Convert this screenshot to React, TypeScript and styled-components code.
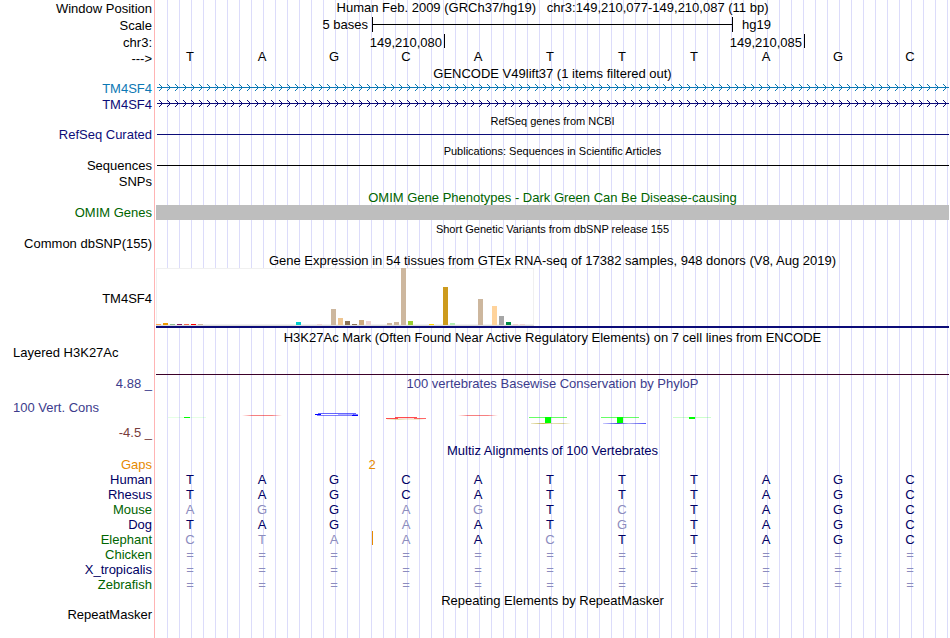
import React from "react";
import styled, { createGlobalStyle } from "styled-components";

const BASES = 11;

const colors = {
  guide: "#dcdcfa",
  edge: "#ffb4b4",
  text: "#000000",
  navy: "#0c0c78",
  blue: "#0c78b4",
  green: "#006400",
  alignment: "#000064",
  mismatch: "#8c8cbe",
  orange: "#e68a00",
  consHigh: "#3c3c8c",
  consLow: "#783c3c",
};

const GlobalStyle = createGlobalStyle`
  body {
    margin: 0;
    background: #fff;
    color: ${colors.text};
    font-family: "Liberation Sans", Arial, Helvetica, sans-serif;
    font-size: 13px;
    line-height: 15px;
  }
`;

const Browser = styled.main`
  box-sizing: border-box;
  width: 100%;
  min-height: 100vh;
  overflow: hidden;
  padding-right: 1px;
  background:
    linear-gradient(${colors.edge}, ${colors.edge}) 154px 0 / 1px 100% no-repeat,
    repeating-linear-gradient(
        to right,
        transparent 0 11px,
        ${colors.guide} 11px 12px
      )
      156px 0 / calc(100% - 157px) 100% no-repeat;
`;

const Row = styled.div<{ $height: number }>`
  display: grid;
  grid-template-columns: 156px minmax(0, 1fr);
  min-height: ${(props) => props.$height}px;
`;

const Label = styled.div<{ $color?: string; $start?: boolean }>`
  display: flex;
  align-items: center;
  justify-content: ${(props) => (props.$start ? "flex-start" : "flex-end")};
  padding: 0 4px 0 13px;
  color: ${(props) => props.$color ?? colors.text};
  white-space: nowrap;
`;

const Title = styled.h2<{ $color?: string; $small?: boolean }>`
  display: flex;
  align-items: center;
  justify-content: center;
  grid-column: 2;
  margin: 0;
  padding-top: 2px;
  color: ${(props) => props.$color ?? colors.text};
  font-size: ${(props) => (props.$small ? 11 : 13)}px;
  font-weight: normal;
  line-height: 12px;
  white-space: pre;
`;

const PositionTitle = styled(Title)`
  padding: 0 0 2px;
`;

const BaseGrid = styled.div`
  display: grid;
  grid-template-columns: repeat(${BASES}, minmax(0, 1fr));
  padding-right: 1px;
`;

const Base = styled.span`
  padding-right: 4px;
  line-height: 13px;
  text-align: center;
`;

const ScaleText = styled.span<{ $column: string; $end?: boolean }>`
  grid-column: ${(props) => props.$column};
  grid-row: 1;
  padding: ${(props) => (props.$end ? "0 4px 0 0" : "0 0 0 10px")};
  text-align: ${(props) => (props.$end ? "right" : "left")};
`;

const ScaleBar = styled.div`
  display: flex;
  align-items: center;
  grid-column: 4 / 9;
  grid-row: 1;
  height: 15px;
  margin-right: -1px;
  border: solid #000;
  border-width: 0 1px;

  &::before {
    content: "";
    flex: 1;
    height: 1px;
    background: #000;
  }
`;

const Position = styled.span<{ $column: string }>`
  grid-column: ${(props) => props.$column};
  height: 14px;
  margin-right: -1px;
  padding-right: 2px;
  border-right: 1px solid #000;
  line-height: 17px;
  text-align: right;
`;

const Track = styled.div`
  display: flex;
  align-items: center;
  padding-left: 1px;
`;

const Line = styled.div<{ $color: string }>`
  flex: 1;
  height: 1px;
  background: ${(props) => props.$color};
`;

const GeneSvg = styled.svg`
  display: block;
  width: 100%;
  height: 8px;
`;

const Block = styled.div`
  background: #bebebe;
`;

const Expression = styled.div`
  display: flex;
  flex-direction: column;
  border-bottom: 2px solid ${colors.navy};
`;

const Bars = styled.div`
  display: flex;
  align-items: flex-end;
  align-self: flex-start;
  gap: 2px;
  height: 57px;
  padding-right: 2px;
  background: #fff;
  border-bottom: 1px solid #dcdcdc;
  box-shadow: inset 0 0 0 1px #f0f0f0;
`;

const Bar = styled.div<{ $height: number; $color: string }>`
  width: 5px;
  height: ${(props) => props.$height}px;
  background: ${(props) => props.$color};
`;

const Regulation = styled.div`
  border-bottom: 1px solid #3c0028;
`;

const RegulationLabel = styled(Label)`
  align-items: flex-start;
`;

const Conservation = styled.div`
  display: grid;
  grid-template-columns: 156px minmax(0, 1fr);
  grid-template-rows: 16px 32px 19px;
`;

const ConservationSvg = styled.svg`
  display: block;
  grid-column: 2;
  grid-row: 2 / 4;
  align-self: end;
  width: 100%;
  height: 49px;
`;

const AlignmentWrapper = styled.div`
  padding-right: 1px;
`;

const AlignmentTable = styled.table`
  width: 100%;
  table-layout: fixed;
  border-collapse: collapse;
`;

const Species = styled.th<{ $color: string }>`
  width: 152px;
  height: 15px;
  padding: 0 4px 0 0;
  color: ${(props) => props.$color};
  font-weight: normal;
  text-align: right;
`;

const Cell = styled.td<{ $muted?: boolean }>`
  position: relative;
  padding: 0 4px 0 0;
  color: ${(props) => (props.$muted ? colors.mismatch : colors.alignment)};
  text-align: center;
`;

const GapCount = styled.span`
  position: absolute;
  top: 0;
  left: 0;
  color: ${colors.orange};
  transform: translateX(-50%);
`;

const Insertion = styled.span`
  position: absolute;
  top: -1px;
  left: 0;
  width: 1px;
  height: 14px;
  background: ${colors.orange};
`;

const REFERENCE = "TAGCATTTAGC";

const SPECIES = [
  { name: "Human", color: colors.alignment, bases: "TAGCATTTAGC" },
  { name: "Rhesus", color: colors.alignment, bases: "TAGCATTTAGC" },
  { name: "Mouse", color: colors.green, bases: "AGGAGTCTAGC" },
  { name: "Dog", color: colors.alignment, bases: "TAGAATGTAGC" },
  {
    name: "Elephant",
    color: colors.green,
    bases: "CTAAACTTAGC",
    insertion: 3,
  },
  { name: "Chicken", color: colors.green, bases: "===========" },
  { name: "X_tropicalis", color: colors.alignment, bases: "===========" },
  { name: "Zebrafish", color: colors.green, bases: "===========" },
];

// tissue index -> bar height and colour
const TISSUES: Record<number, [number, string]> = {
  0: [1, "#ffa54f"],
  1: [2, "#ee9a00"],
  2: [1, "#8fbc8f"],
  3: [1, "#8b1c62"],
  4: [1, "#ee6a50"],
  5: [1, "#ff0000"],
  6: [1, "#cdb79e"],
  20: [3, "#00cdcd"],
  23: [1, "#eed5d2"],
  25: [16, "#cdb79e"],
  26: [7, "#eec591"],
  27: [4, "#8b7355"],
  28: [1, "#8b7355"],
  29: [5, "#cdaa7d"],
  30: [4, "#eed5d2"],
  33: [2, "#cdb79e"],
  34: [3, "#cdb79e"],
  35: [57, "#cdb79e"],
  36: [4, "#9acd32"],
  39: [1, "#ffd700"],
  41: [38, "#cd9b1d"],
  42: [2, "#b4eeb4"],
  46: [26, "#cdb79e"],
  48: [19, "#ffd39b"],
  49: [9, "#a6a6a6"],
  50: [3, "#008b45"],
  51: [1, "#eed5d2"],
  52: [1, "#eed5d2"],
};

interface TitleRowProps {
  children: React.ReactNode;
  height?: number;
  color?: string;
  small?: boolean;
}

const TitleRow = ({ children, height = 16, color, small }: TitleRowProps) => (
  <Row $height={height}>
    <Title $color={color} $small={small}>
      {children}
    </Title>
  </Row>
);

const GeneTrack = ({ id, color }: { id: string; color: string }) => (
  <Row $height={16}>
    <Label $color={color}>TM4SF4</Label>
    <Track>
      <GeneSvg aria-hidden="true">
        <defs>
          <pattern id={id} width="8" height="8" patternUnits="userSpaceOnUse">
            <path
              d="M2 0h1v1h1v1h1v1h1v1h-1v1h-1v1h-1v1h-1v-1h1v-1h1v-1h1v-1h-1v-1h-1v-1h-1z"
              fill={color}
            />
          </pattern>
        </defs>
        <rect width="100%" height="8" fill={`url(#${id})`} />
        <rect y="3" width="100%" height="1" fill={color} />
      </GeneSvg>
    </Track>
  </Row>
);

const ConservationPlot = () => (
  <ConservationSvg
    viewBox="0 0 793 49"
    preserveAspectRatio="none"
    shapeRendering="crispEdges"
    aria-hidden="true"
  >
    <defs>
      <linearGradient id="redFade">
        <stop offset="0" stopColor="#f00" stopOpacity="0" />
        <stop offset="0.25" stopColor="#e00" stopOpacity="0.5" />
        <stop offset="0.75" stopColor="#e00" stopOpacity="0.5" />
        <stop offset="1" stopColor="#f00" stopOpacity="0" />
      </linearGradient>
      <linearGradient id="oliveFade">
        <stop offset="0" stopColor="#aa9600" stopOpacity="0.2" />
        <stop offset="0.3" stopColor="#aa9600" stopOpacity="0.7" />
        <stop offset="0.5" stopColor="#aa9600" stopOpacity="0.3" />
        <stop offset="0.8" stopColor="#aa9600" stopOpacity="0.4" />
        <stop offset="1" stopColor="#aa9600" stopOpacity="0" />
      </linearGradient>
      <linearGradient id="blueFade">
        <stop offset="0" stopColor="#00f" stopOpacity="0.2" />
        <stop offset="0.35" stopColor="#00c" stopOpacity="0.7" />
        <stop offset="0.6" stopColor="#00c" stopOpacity="0.3" />
        <stop offset="1" stopColor="#00f" stopOpacity="0.7" />
      </linearGradient>
    </defs>
    <rect x="12" y="24" width="38" height="1" fill="#0f0" opacity="0.1" />
    <rect x="28" y="24" width="6" height="1" fill="#0f0" />
    <rect x="86" y="22" width="40" height="1" fill="url(#redFade)" />

    <rect x="162" y="20" width="38" height="1" fill="#00f" opacity="0.6" />
    <rect x="159" y="21" width="6" height="1" fill="#00f" />
    <rect x="182" y="21" width="16" height="1" fill="#00f" opacity="0.3" />
    <rect x="197" y="21" width="5" height="1" fill="#00f" opacity="0.5" />
    <rect x="165" y="21" width="17" height="1" fill="#fff" />
    <rect x="161" y="22" width="37" height="1" fill="#00f" opacity="0.5" />
    <rect x="196" y="22" width="6" height="1" fill="#00f" />

    <rect x="239" y="24" width="22" height="1" fill="#f00" opacity="0.7" />
    <rect x="230" y="25" width="12" height="1" fill="#f00" opacity="0.7" />
    <rect x="242" y="25" width="16" height="1" fill="#f00" opacity="0.15" />
    <rect x="258" y="25" width="12" height="1" fill="#f00" opacity="0.6" />
    <rect x="231" y="26" width="38" height="1" fill="url(#oliveFade)" opacity="0.5" />

    <rect x="302" y="22" width="40" height="1" fill="url(#redFade)" />

    <rect x="373" y="24" width="38" height="1" fill="#0f0" opacity="0.6" />
    <rect x="389" y="24" width="6" height="6" fill="#0f0" />
    <rect x="375" y="30" width="40" height="1" fill="url(#oliveFade)" />

    <rect x="445" y="24" width="38" height="1" fill="#0f0" opacity="0.6" />
    <rect x="461" y="24" width="6" height="6" fill="#0f0" />
    <rect x="447" y="30" width="43" height="1" fill="url(#blueFade)" />

    <rect x="517" y="24" width="38" height="1" fill="#0f0" opacity="0.2" />
    <rect x="533" y="24" width="6" height="2" fill="#0f0" />
  </ConservationSvg>
);

const Alignment = () => (
  <AlignmentWrapper>
    <AlignmentTable>
      <tbody>
        <tr>
          <Species scope="row" $color={colors.orange}>
            Gaps
          </Species>
          {Array.from({ length: BASES }, (_, i) => (
            <Cell key={i}>{i === 3 && <GapCount>2</GapCount>}</Cell>
          ))}
        </tr>
        {SPECIES.map((species) => (
          <tr key={species.name}>
            <Species scope="row" $color={species.color}>
              {species.name}
            </Species>
            {species.bases.split("").map((base, i) => (
              <Cell key={i} $muted={base !== REFERENCE[i]}>
                {species.insertion === i && <Insertion />}
                {base}
              </Cell>
            ))}
          </tr>
        ))}
      </tbody>
    </AlignmentTable>
  </AlignmentWrapper>
);

const App = () => (
  <>
    <GlobalStyle />
    <Browser>
      <Row $height={17}>
        <Label>Window Position</Label>
        <PositionTitle as="h1">
          {"Human Feb. 2009 (GRCh37/hg19)   chr3:149,210,077-149,210,087 (11 bp)"}
        </PositionTitle>
      </Row>
      <Row $height={17}>
        <Label>Scale</Label>
        <BaseGrid>
          <ScaleText $column="1 / 4" $end>
            5 bases
          </ScaleText>
          <ScaleBar />
          <ScaleText $column="9 / 12">hg19</ScaleText>
        </BaseGrid>
      </Row>
      <Row $height={16}>
        <Label>chr3:</Label>
        <BaseGrid>
          <Position $column="1 / 5">149,210,080</Position>
          <Position $column="5 / 10">149,210,085</Position>
        </BaseGrid>
      </Row>
      <Row $height={16}>
        <Label>---&gt;</Label>
        <BaseGrid>
          {REFERENCE.split("").map((base, i) => (
            <Base key={i}>{base}</Base>
          ))}
        </BaseGrid>
      </Row>

      <TitleRow height={14}>GENCODE V49lift37 (1 items filtered out)</TitleRow>
      <GeneTrack id="arrowsBlue" color={colors.blue} />
      <GeneTrack id="arrowsNavy" color={colors.navy} />

      <TitleRow height={15} small>
        RefSeq genes from NCBI
      </TitleRow>
      <Row $height={15}>
        <Label $color={colors.navy}>RefSeq Curated</Label>
        <Track>
          <Line $color={colors.navy} />
        </Track>
      </Row>

      <TitleRow small>Publications: Sequences in Scientific Articles</TitleRow>
      <Row $height={15}>
        <Label>Sequences</Label>
        <Track>
          <Line $color="#000" />
        </Track>
      </Row>
      <Row $height={16}>
        <Label>SNPs</Label>
      </Row>

      <TitleRow color={colors.green}>
        OMIM Gene Phenotypes - Dark Green Can Be Disease-causing
      </TitleRow>
      <Row $height={15}>
        <Label $color={colors.green}>OMIM Genes</Label>
        <Block />
      </Row>

      <TitleRow small>Short Genetic Variants from dbSNP release 155</TitleRow>
      <Row $height={15}>
        <Label>Common dbSNP(155)</Label>
      </Row>

      <TitleRow height={17}>
        Gene Expression in 54 tissues from GTEx RNA-seq of 17382 samples, 948
        donors (V8, Aug 2019)
      </TitleRow>
      <Row $height={60}>
        <Label>TM4SF4</Label>
        <Expression>
          <Bars>
            {Array.from({ length: 54 }, (_, i) => {
              const [height, color] = TISSUES[i] ?? [0, "transparent"];
              return <Bar key={i} $height={height} $color={color} />;
            })}
          </Bars>
        </Expression>
      </Row>

      <TitleRow height={17}>
        H3K27Ac Mark (Often Found Near Active Regulatory Elements) on 7 cell
        lines from ENCODE
      </TitleRow>
      <Row $height={30}>
        <RegulationLabel $start>Layered H3K27Ac</RegulationLabel>
        <Regulation />
      </Row>

      <Conservation>
        <Label $color={colors.consHigh}>4.88 _</Label>
        <Title $color={colors.consHigh}>
          100 vertebrates Basewise Conservation by PhyloP
        </Title>
        <Label $color={colors.consHigh} $start>
          100 Vert. Cons
        </Label>
        <Label $color={colors.consLow}>-4.5 _</Label>
        <ConservationPlot />
      </Conservation>

      <TitleRow height={15} color={colors.alignment}>
        Multiz Alignments of 100 Vertebrates
      </TitleRow>
      <Alignment />

      <TitleRow height={15}>Repeating Elements by RepeatMasker</TitleRow>
      <Row $height={15}>
        <Label>RepeatMasker</Label>
      </Row>
    </Browser>
  </>
);

export default App;
